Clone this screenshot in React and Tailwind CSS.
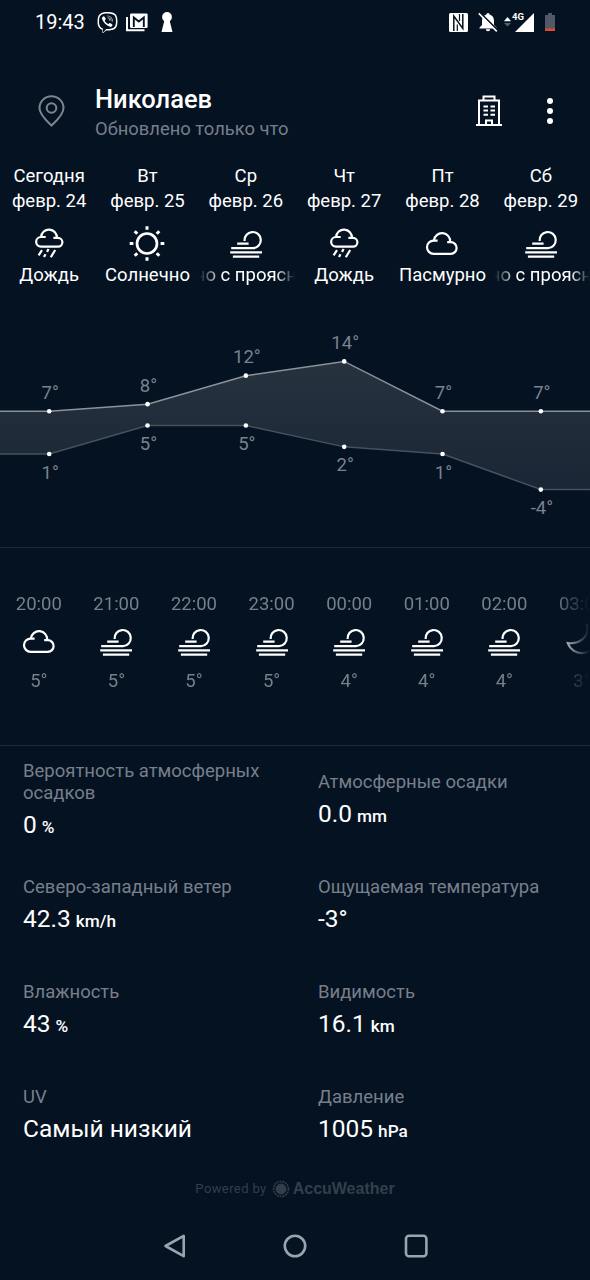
import { FaViber } from "react-icons/fa";

const days = [
    { name: "Сегодня", date: "февр. 24", icon: "rain", label: "Дождь", high: 7, low: 1 },
    { name: "Вт", date: "февр. 25", icon: "sun", label: "Солнечно", high: 8, low: 5 },
    { name: "Ср", date: "февр. 26", icon: "wind", label: "но с проясн", high: 12, low: 5, fade: true },
    { name: "Чт", date: "февр. 27", icon: "rain", label: "Дождь", high: 14, low: 2 },
    { name: "Пт", date: "февр. 28", icon: "cloud", label: "Пасмурно", high: 7, low: 1 },
    { name: "Сб", date: "февр. 29", icon: "wind", label: "но с проясн", high: 7, low: -4, fade: true },
];

const hours = [
    { time: "20:00", icon: "cloud", temp: 5 },
    { time: "21:00", icon: "wind", temp: 5 },
    { time: "22:00", icon: "wind", temp: 5 },
    { time: "23:00", icon: "wind", temp: 5 },
    { time: "00:00", icon: "wind", temp: 4 },
    { time: "01:00", icon: "wind", temp: 4 },
    { time: "02:00", icon: "wind", temp: 4 },
    { time: "03:00", icon: "moon", temp: 3 },
];

const details = [
    { label: "Вероятность атмосферных осадков", value: "0", unit: "%" },
    { label: "Атмосферные осадки", value: "0.0", unit: "mm" },
    { label: "Северо-западный ветер", value: "42.3", unit: "km/h" },
    { label: "Ощущаемая температура", value: "-3°" },
    { label: "Влажность", value: "43", unit: "%" },
    { label: "Видимость", value: "16.1", unit: "km" },
    { label: "UV", value: "Самый низкий" },
    { label: "Давление", value: "1005", unit: "hPa" },
];

const weatherPaths = {
    rain: (
        <>
            <path d="M14.7 12H10a4.85 4.85 0 0 0 0 9.7h17a4.4 4.4 0 0 0 0-8.8h-4.6" />
            <path d="M10.1 12a7.9 7.9 0 0 1 15.8.9" />
            <path d="M11 25.2l-3.4 5.2M17.6 24l-1.6 2.9M14.5 29.2l-1.5 2.8M24.2 25l-4.4 7.2" />
        </>
    ),
    sun: (
        <>
            <circle cx="18" cy="18.5" r="10" strokeWidth="2.7" />
            <path
                strokeWidth="3"
                d="M18 1.2v3.6M18 32.2v3.6M.7 18.5h3.7M31.6 18.5h3.7M5.7 6.2l2.6 2.6M27.7 28.2l2.6 2.6M30.3 6.2l-2.6 2.6M8.3 28.2l-2.6 2.6"
            />
        </>
    ),
    wind: (
        <>
            <path d="M3.2 23.2H25a8.1 8.1 0 1 0-8.4-7.2" />
            <path d="M9.2 18.7h11.4M2.2 27.4H34M4.9 31.6h26.3" />
        </>
    ),
    cloud: (
        <>
            <path d="M13.6 15.6H9.6a6.6 6.6 0 0 0 0 13.2h17.2a5.8 5.8 0 0 0 0-11.6h-3.6" />
            <path d="M9.8 15.6a8.2 8.2 0 0 1 16.4 1.6" />
        </>
    ),
    moon: <path d="M3.8 20C14 21.5 26 15 23 2C31 5 34.5 12 32.5 19C29 32.5 9 34.5 3.8 20Z" />,
};

function WeatherIcon({ type }) {
    return (
        <svg viewBox="0 0 36 36" className="size-9 shrink-0 overflow-visible" fill="none" stroke="white" strokeWidth="2.2">
            {weatherPaths[type]}
        </svg>
    );
}

function StatusBar() {
    return (
        <div className="flex h-11 items-center px-[35px]">
            <span className="text-[20px] leading-none">19:43</span>
            <FaViber className="ml-3 size-[21px]" />
            {/* stacked mail */}
            <svg viewBox="0 0 22 19" className="ml-2 h-[19px] w-[22px]">
                <path d="M1 4v13.2h17.5" fill="none" stroke="white" strokeWidth="2" />
                <rect x="4" y="0.5" width="17.6" height="14.5" rx="1.3" fill="white" />
                <path d="M7.8 14V4.5l5 4 5-4V14" fill="none" stroke="#051222" strokeWidth="1.9" />
            </svg>
            <svg viewBox="0 0 12 20" className="ml-[13px] h-5 w-3" fill="white">
                <circle cx="6" cy="5" r="4.9" />
                <path d="M3.5 8h5l3 12H.5z" />
            </svg>
            {/* nfc */}
            <svg viewBox="0 0 19 19" className="ml-auto size-[19px]">
                <rect width="19" height="19" rx="1.5" fill="white" />
                <path d="M4.8 18V3l9 12.500V1" fill="none" stroke="#051222" strokeWidth="1.5" />
                <path d="M8.300 18v-6.500M10.500 1v7" fill="none" stroke="#051222" strokeWidth="1.2" />
            </svg>
            <svg viewBox="0 0 20 20" className="ml-[10px] size-5">
                <path d="M10 1a1.600 1.600 0 0 1 1.600 1.600C14.600 3.400 16 6 16 8.800V13l2.500 2.500v.9h-17v-.9L4 13V8.800C4 6 5.400 3.400 8.400 2.600A1.600 1.600 0 0 1 10 1zM7.800 17.300h4.400a2.200 2 0 0 1-4.400 0z" fill="white" />
                <path d="M2.200.8l18 18" stroke="#051222" strokeWidth="1.8" />
                <path d="M.8 1.400l18 18" stroke="white" strokeWidth="1.5" />
            </svg>
            <svg viewBox="0 0 7 10" className="ml-[6px] h-[10px] w-[7px]">
                <path d="M0 4.2L3.5 0 7 4.2z" fill="white" />
                <path d="M0 6L3.5 9.5 7 6z" fill="#59616c" />
            </svg>
            <div className="relative ml-[3px] h-[19px] w-[20px]">
                <svg viewBox="0 0 20 19" className="size-full">
                    <path d="M20 0v19H1z" fill="white" />
                </svg>
                <span className="absolute -left-0.5 -top-px bg-[#051222] text-[9.5px] font-bold leading-[9px]">4G</span>
            </div>
            <svg viewBox="0 0 10 18" className="ml-[11px] h-[18px] w-[10px]">
                <path d="M0 2h3V0h4v2h3v16H0z" fill="#525966" />
                <path d="M0 15.5h10V18H0z" fill="#e2492f" />
            </svg>
        </div>
    );
}

function Header() {
    return (
        <div className="flex h-[111px] items-start pl-[38px] pr-[36px] pt-[24px]">
            <svg viewBox="0 0 27 32" className="mt-[27px] h-8 w-[27px]" fill="none" stroke="#7d858f" strokeWidth="2">
                <path d="M13.5 30.5C9.5 26.5 1.5 20 1.5 13a12 11.8 0 0 1 24 0c0 7-8 13.5-12 17.5z" />
                <circle cx="13.5" cy="13" r="4.8" />
            </svg>
            <div className="ml-[30px] pt-4">
                <h1 className="text-[25.5px] font-medium leading-[30px]">Николаев</h1>
                <p className="pt-px text-[18.4px] leading-[28px] text-[#777f8a]">Обновлено только что</p>
            </div>
            <svg viewBox="0 0 26 32" className="ml-auto mt-[27px] h-8 w-[26px]" fill="none" stroke="white" strokeWidth="2">
                <path d="M0 30h26M3 30V5.500h20V30M7.500 5.500V1.500h11v4M10 30v-4.500h6V30" />
                <path d="M7.5 11.5h4.5M14.5 11.5H19M7.5 15.5h4.5M14.5 15.5H19M7.5 19.8h4.5M14.5 19.8H19" />
            </svg>
            <svg viewBox="0 0 8 28" className="ml-11 mt-[29px] h-7 w-2" fill="white">
                <circle cx="4" cy="4" r="3" />
                <circle cx="4" cy="14" r="3" />
                <circle cx="4" cy="24" r="3" />
            </svg>
        </div>
    );
}

function DailyForecast() {
    return (
        <div className="grid h-[145px] grid-cols-6 pt-[9px] text-[18.5px]">
            {days.map((day, id) => (
                <div key={id} className="flex min-w-0 flex-col items-center">
                    <p className="leading-[25px]">{day.name}</p>
                    <p className="leading-[25px] whitespace-nowrap">{day.date}</p>
                    <div className="mt-[11px]">
                        <WeatherIcon type={day.icon} />
                    </div>
                    {day.fade ? (
                        <div className="flex w-full justify-center overflow-hidden [mask-image:linear-gradient(to_right,transparent_2%,black_26%,black_80%,transparent)]">
                            <p className="shrink-0 whitespace-nowrap leading-[28px]">{day.label}</p>
                        </div>
                    ) : (
                        <p className="leading-[28px]">{day.label}</p>
                    )}
                </div>
            ))}
        </div>
    );
}

// one degree is 7.12px
const tempY = (t) => 161.1 - t * 7.12;
const dayX = (i) => 49.2 + i * 98.33;

function TemperatureChart() {
    const line = (key) =>
        [[0, tempY(days[0][key])], ...days.map((d, i) => [dayX(i), tempY(d[key])]), [590, tempY(days[5][key])]];
    const high = line("high");
    const low = line("low");
    return (
        <svg viewBox="0 0 590 247" className="block h-[247px] w-[590px]">
            <defs>
                <linearGradient id="band" x1="0" y1="61" x2="0" y2="190" gradientUnits="userSpaceOnUse">
                    <stop offset="0" stopColor="#27323f" />
                    <stop offset="1" stopColor="#1a2635" />
                </linearGradient>
            </defs>
            <polygon points={[...high, ...[...low].reverse()].join(" ")} fill="url(#band)" />
            <polyline points={high.join(" ")} fill="none" stroke="#8b929c" strokeWidth="1.5" />
            <polyline points={low.join(" ")} fill="none" stroke="#47515e" strokeWidth="1.5" />
            {days.map((d, i) => (
                <g key={i} fill="#7a828d" fontSize="18.5" textAnchor="middle">
                    <circle cx={dayX(i)} cy={tempY(d.high)} r="2.3" fill="white" />
                    <circle cx={dayX(i)} cy={tempY(d.low)} r="2.3" fill="white" />
                    <text x={dayX(i) + 1} y={tempY(d.high) - 12.5}>{d.high}°</text>
                    <text x={dayX(i) + 1} y={tempY(d.low) + 24.6}>{d.low}°</text>
                </g>
            ))}
        </svg>
    );
}

function HourlyForecast() {
    return (
        <div className="h-[199px] border-y border-[#1f2a38]">
            <div className="flex h-full overflow-hidden pt-[43px] text-[18.5px] text-[#777f8a] [mask-image:linear-gradient(to_right,black_94%,transparent)]">
                {hours.map((hour, id) => (
                    <div key={id} className="flex w-[77.6px] shrink-0 flex-col items-center">
                        <p className="leading-[26px]">{hour.time}</p>
                        <div className="mt-1.5">
                            <WeatherIcon type={hour.icon} />
                        </div>
                        <p className="mt-[9px] leading-[26px]">{hour.temp}°</p>
                    </div>
                ))}
            </div>
        </div>
    );
}

function Details() {
    return (
        <div className="grid auto-rows-[105px] grid-cols-2 pt-0.5">
            {details.map((item, id) => (
                <div key={id} className="flex flex-col justify-center pl-[23px] pr-6">
                    <p className="text-[18.5px] leading-[22px] text-[#777f8a]">{item.label}</p>
                    <p className="mt-[5px] text-[24.5px] leading-[32px]">
                        {item.value}
                        {item.unit && <span className="ml-[5px] text-[17.2px] font-medium leading-none">{item.unit}</span>}
                    </p>
                </div>
            ))}
        </div>
    );
}

function Footer() {
    return (
        <div className="flex h-[42px] items-center justify-center text-[#343e4b]">
            <span className="text-[13px] tracking-[0.4px]">Powered by</span>
            <svg viewBox="0 0 18 18" className="ml-[5px] size-[18px]" fill="none" stroke="currentColor">
                <circle cx="9" cy="9" r="5" fill="currentColor" />
                <circle cx="9" cy="9" r="7.5" strokeWidth="1.6" strokeDasharray="2 0.8" />
            </svg>
            <span className="ml-[3px] font-['Liberation_Sans',sans-serif] text-[16px] font-bold">AccuWeather</span>
        </div>
    );
}

function NavBar() {
    return (
        <div className="flex h-[71px] items-center justify-between px-[162px]">
            <svg viewBox="0 0 24 24" className="size-6" fill="none" stroke="#9aa3ae" strokeWidth="2.6" strokeLinejoin="round">
                <path d="M3.5 12L21.7 1.8v20.4z" />
            </svg>
            <svg viewBox="0 0 24 24" className="size-6" fill="none" stroke="#9aa3ae" strokeWidth="2.6">
                <circle cx="12" cy="12" r="10.2" />
            </svg>
            <svg viewBox="0 0 24 24" className="size-6" fill="none" stroke="#9aa3ae" strokeWidth="2.6">
                <rect x="2" y="1.8" width="20.4" height="20.4" rx="3" />
            </svg>
        </div>
    );
}

export default function App() {
    return (
        <div className="h-[1280px] w-[590px] overflow-hidden bg-[#051222] font-[Roboto,sans-serif] text-white">
            <StatusBar />
            <Header />
            <DailyForecast />
            <TemperatureChart />
            <HourlyForecast />
            <Details />
            <Footer />
            <NavBar />
        </div>
    );
}
